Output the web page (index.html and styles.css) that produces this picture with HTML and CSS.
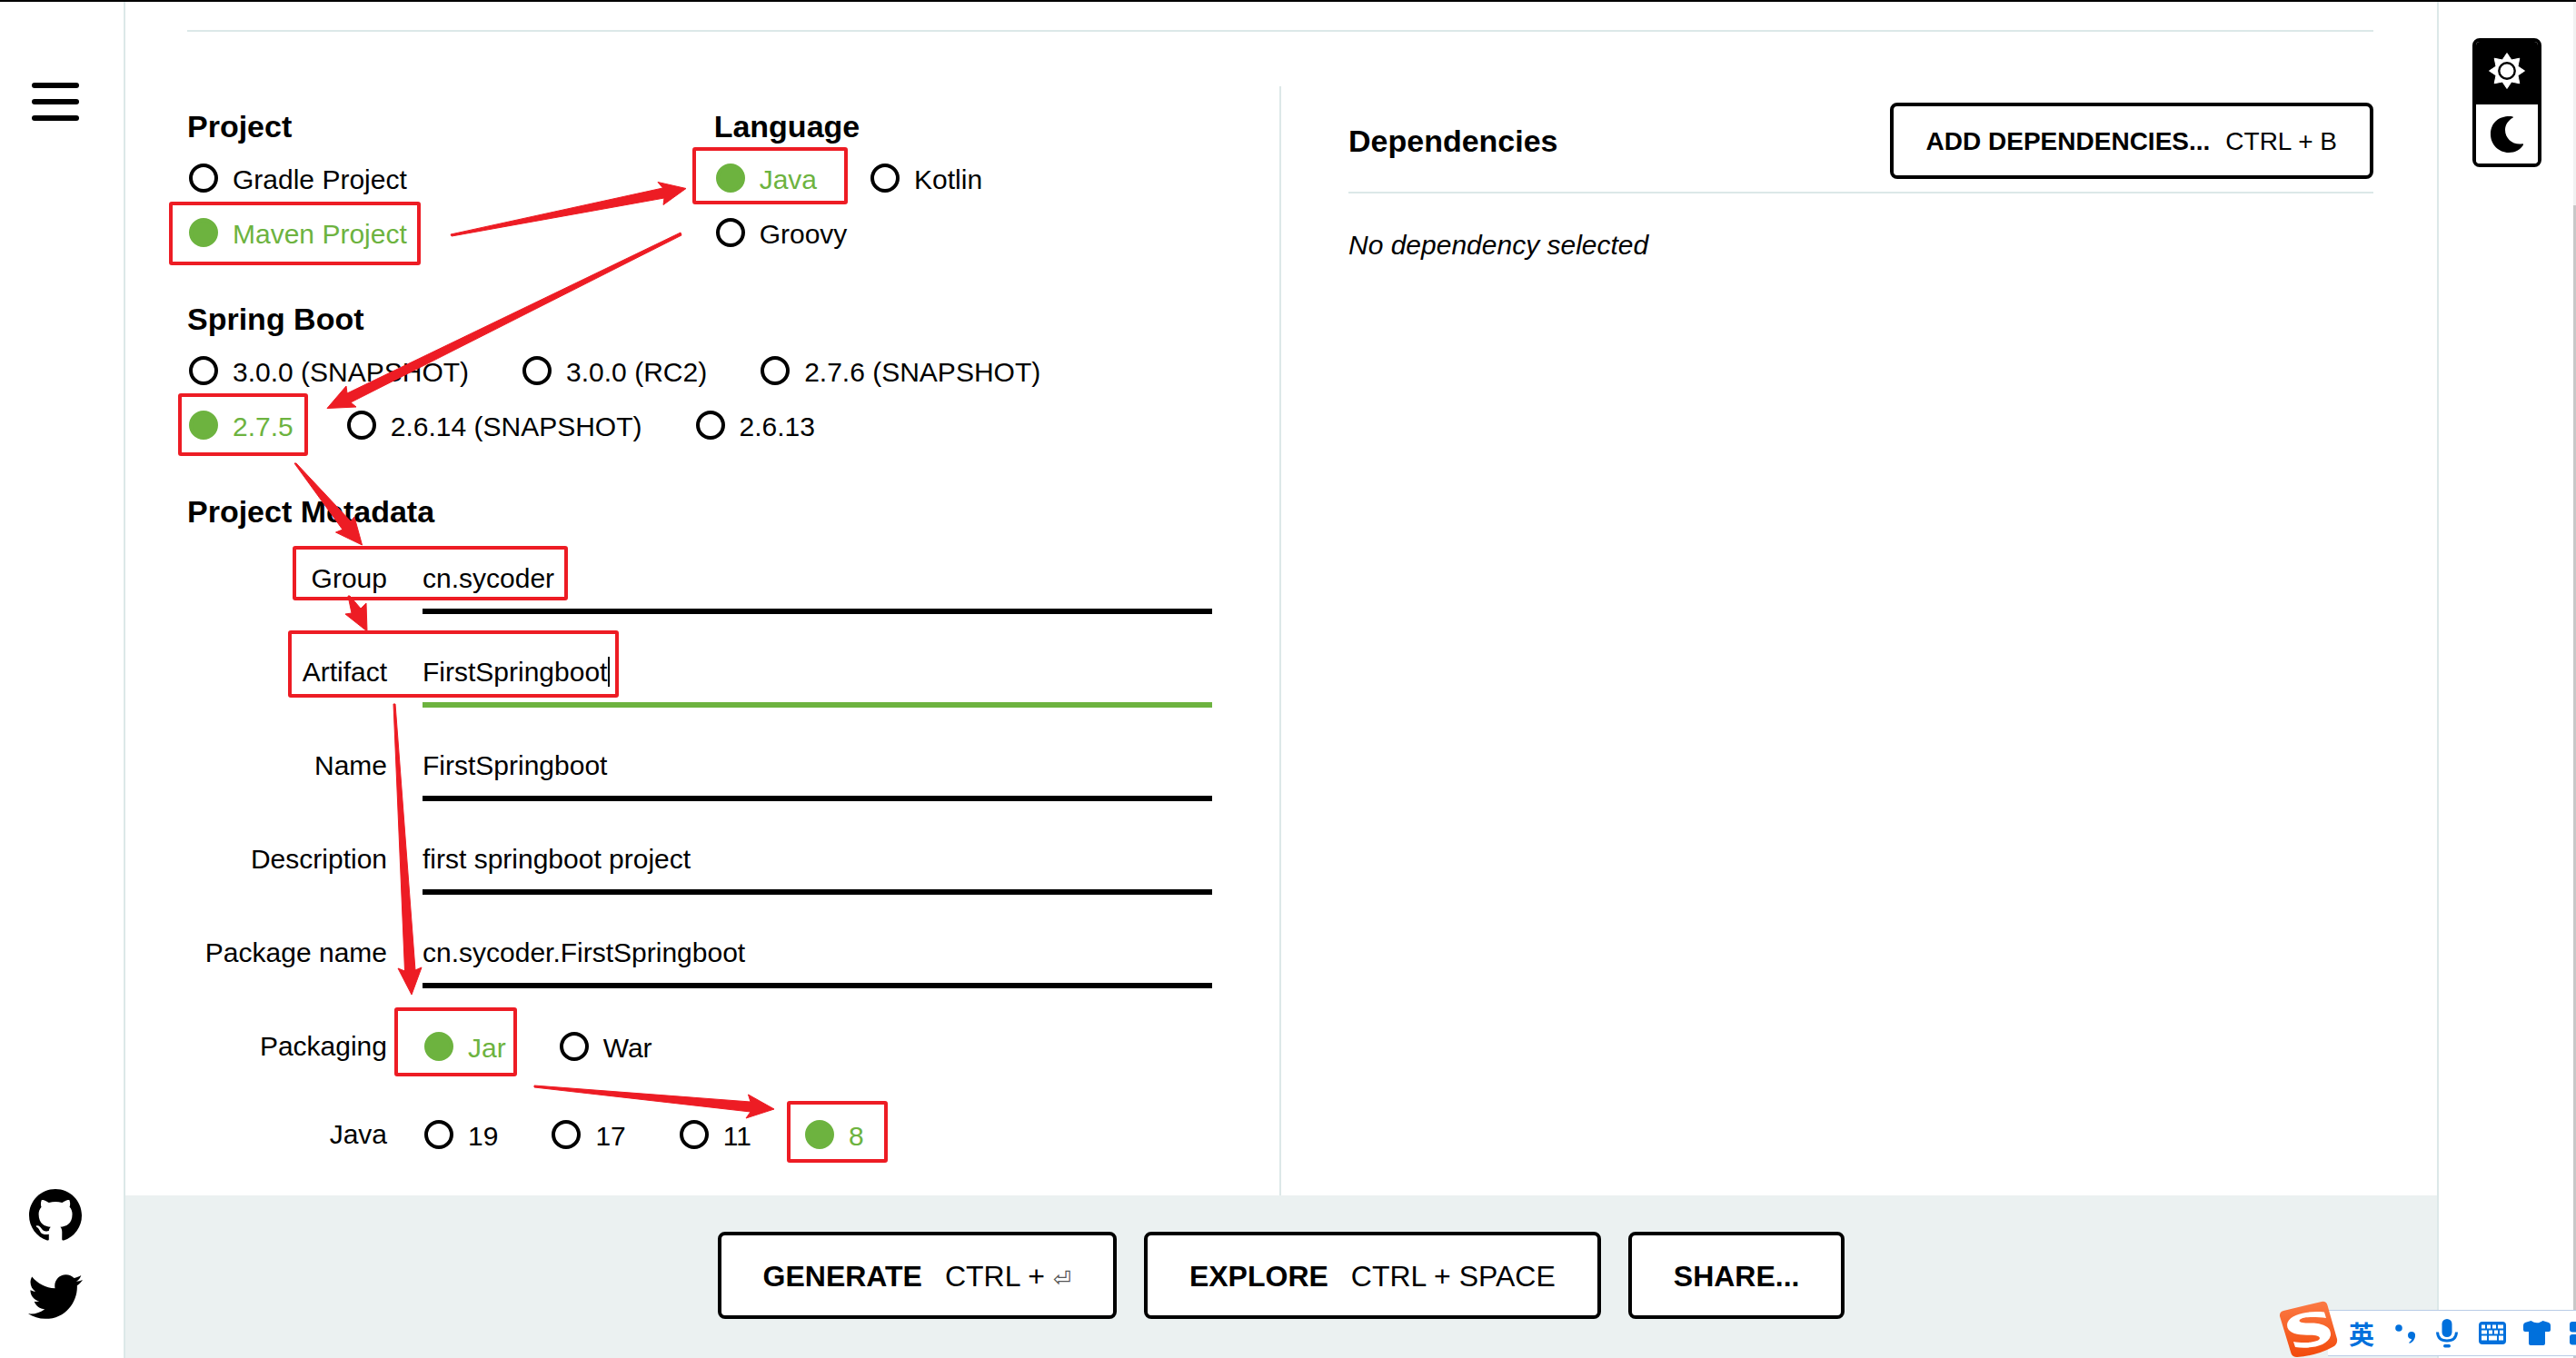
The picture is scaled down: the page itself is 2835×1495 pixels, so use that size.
FILE: index.html
```html
<!DOCTYPE html>
<html lang="en">
<head>
<meta charset="utf-8">
<title>Spring Initializr</title>
<link rel="stylesheet" href="styles.css">
</head>
<body>
<div class="page">
  <aside class="side side-left">
    <button class="menu" type="button" aria-label="Menu"><span></span><span></span><span></span></button>
    <nav class="social">
      <a href="#github" aria-label="GitHub"><svg class="icon-github" viewBox="0 0 16 16"><path d="M8 0C3.58 0 0 3.58 0 8c0 3.54 2.29 6.53 5.47 7.59.4.07.55-.17.55-.38 0-.19-.01-.82-.01-1.49-2.01.37-2.53-.49-2.69-.94-.09-.23-.48-.94-.82-1.13-.28-.15-.68-.52-.01-.53.63-.01 1.08.58 1.23.82.72 1.21 1.87.87 2.33.66.07-.52.28-.87.51-1.07-1.78-.2-3.64-.89-3.64-3.95 0-.87.31-1.59.82-2.15-.08-.2-.36-1.02.08-2.12 0 0 .67-.21 2.2.82.64-.18 1.32-.27 2-.27s1.36.09 2 .27c1.53-1.04 2.2-.82 2.2-.82.44 1.1.16 1.92.08 2.12.51.56.82 1.27.82 2.15 0 3.07-1.87 3.75-3.65 3.95.29.25.54.73.54 1.48 0 1.07-.01 1.93-.01 2.2 0 .21.15.46.55.38A8.01 8.01 0 0 0 16 8c0-4.42-3.58-8-8-8z"/></svg></a>
      <a href="#twitter" aria-label="Twitter"><svg class="icon-twitter" viewBox="0 47 512 418"><path d="M459.37 151.716c.325 4.548.325 9.097.325 13.645 0 138.72-105.583 298.558-298.558 298.558-59.452 0-114.68-17.219-161.137-47.106 8.447.974 16.568 1.299 25.34 1.299 49.055 0 94.213-16.568 130.274-44.832-46.132-.975-84.792-31.188-98.112-72.772 6.498.974 12.995 1.624 19.818 1.624 9.421 0 18.843-1.3 27.614-3.573-48.081-9.747-84.143-51.98-84.143-102.985v-1.299c13.969 7.797 30.214 12.67 47.431 13.319-28.264-18.843-46.781-51.005-46.781-87.391 0-19.492 5.197-37.36 14.294-52.954 51.655 63.675 129.3 105.258 216.365 109.807-1.624-7.797-2.599-15.918-2.599-24.04 0-57.828 46.782-104.934 104.934-104.934 30.213 0 57.502 12.67 76.67 33.137 23.715-4.548 46.456-13.32 66.599-25.34-7.798 24.366-24.366 44.833-46.132 57.827 21.117-2.273 41.584-8.122 60.426-16.243-14.292 20.791-32.161 39.308-52.628 54.253z"/></svg></a>
    </nav>
  </aside>

  <main class="main">
    <form class="content" id="generator">
      <section class="panel panel-left">
        <div class="row-pair">
          <div role="radiogroup" aria-labelledby="h-project">
            <h2 id="h-project">Project</h2>
            <div class="options">
              <label class="option"><input type="radio" name="project"><span>Gradle Project</span></label>
              <label class="option"><input type="radio" name="project" checked><span>Maven Project</span></label>
            </div>
          </div>
          <div role="radiogroup" aria-labelledby="h-language">
            <h2 id="h-language">Language</h2>
            <div class="options">
              <label class="option"><input type="radio" name="language" checked><span>Java</span></label>
              <label class="option"><input type="radio" name="language"><span>Kotlin</span></label>
              <label class="option"><input type="radio" name="language"><span>Groovy</span></label>
            </div>
          </div>
        </div>

        <div role="radiogroup" aria-labelledby="h-boot">
          <h2 id="h-boot">Spring Boot</h2>
          <div class="options">
            <label class="option"><input type="radio" name="boot"><span>3.0.0 (SNAPSHOT)</span></label>
            <label class="option"><input type="radio" name="boot"><span>3.0.0 (RC2)</span></label>
            <label class="option"><input type="radio" name="boot"><span>2.7.6 (SNAPSHOT)</span></label>
            <label class="option"><input type="radio" name="boot" checked><span>2.7.5</span></label>
            <label class="option"><input type="radio" name="boot"><span>2.6.14 (SNAPSHOT)</span></label>
            <label class="option"><input type="radio" name="boot"><span>2.6.13</span></label>
          </div>
        </div>

        <div>
          <h2>Project Metadata</h2>
          <div class="fields">
            <label class="name" for="group">Group</label>
            <input class="text" id="group" type="text" value="cn.sycoder">
            <label class="name" for="artifact">Artifact</label>
            <input class="text is-active" id="artifact" type="text" value="FirstSpringboot">
            <label class="name" for="name">Name</label>
            <input class="text" id="name" type="text" value="FirstSpringboot">
            <label class="name" for="description">Description</label>
            <input class="text" id="description" type="text" value="first springboot project">
            <label class="name" for="package">Package name</label>
            <input class="text" id="package" type="text" value="cn.sycoder.FirstSpringboot">
            <span class="name" id="l-packaging">Packaging</span>
            <div class="options" role="radiogroup" aria-labelledby="l-packaging">
              <label class="option"><input type="radio" name="packaging" checked><span>Jar</span></label>
              <label class="option"><input type="radio" name="packaging"><span>War</span></label>
            </div>
            <span class="name" id="l-java">Java</span>
            <div class="options" role="radiogroup" aria-labelledby="l-java">
              <label class="option"><input type="radio" name="java"><span>19</span></label>
              <label class="option"><input type="radio" name="java"><span>17</span></label>
              <label class="option"><input type="radio" name="java"><span>11</span></label>
              <label class="option"><input type="radio" name="java" checked><span>8</span></label>
            </div>
          </div>
        </div>
      </section>

      <div class="divider"></div>

      <section class="panel panel-right">
        <header class="deps-head">
          <h2>Dependencies</h2>
          <button class="btn btn-small" type="button"><b>ADD DEPENDENCIES...</b><span>CTRL + B</span></button>
        </header>
        <p class="empty">No dependency selected</p>
      </section>
    </form>

    <footer class="actions">
      <button class="btn" type="submit" form="generator"><b>GENERATE</b><span>CTRL + <span class="return">⏎</span></span></button>
      <button class="btn" type="button"><b>EXPLORE</b><span>CTRL + SPACE</span></button>
      <button class="btn" type="button"><b>SHARE...</b></button>
    </footer>
  </main>

  <aside class="side side-right">
    <div class="switch">
      <button class="mode is-on" type="button" aria-label="Light theme">
        <svg width="42" height="42" viewBox="-21 -21 42 42"><g fill="#fff" stroke="#fff" stroke-width="1" stroke-linejoin="round"><path d="M0-19.500L5-12 13.800-13.800 12-5 19.500 0 12 5 13.800 13.800 5 12 0 19.500-5 12-13.800 13.800-12 5-19.500 0-12-5-13.800-13.800-5-12z"/></g><circle r="8.700" fill="#fff" stroke="#000" stroke-width="2.400"/></svg>
      </button>
      <button class="mode" type="button" aria-label="Dark theme">
        <svg width="38" height="42" viewBox="0 0 38 42"><path d="M25.500 1.500C15-.5 1 5 1 21c0 11 9 20 20 20 7 0 13-3.500 16-8.500.3-1-.2-1.300-1-1.200C26 33 17 26 17 16c0-5.500 3.500-10.500 8.300-13.200.7-.5.8-1.100.2-1.300z"/></svg>
      </button>
    </div>
  </aside>
</div>

<div class="scrollbar"><span></span></div>

<svg class="marks" width="1100" height="1300" viewBox="0 0 1100 1300" aria-hidden="true">
  <rect x="669" y="723" width="2" height="33"/>
  <g class="boxes">
    <rect x="188" y="224" width="273" height="66" rx="1"/>
    <rect x="764" y="164" width="167" height="59" rx="1"/>
    <rect x="198" y="435" width="139" height="65" rx="1"/>
    <rect x="324" y="603" width="299" height="56" rx="1"/>
    <rect x="319" y="696" width="360" height="70" rx="1"/>
    <rect x="436" y="1111" width="131" height="72" rx="1"/>
    <rect x="868" y="1214" width="107" height="64" rx="1"/>
  </g>
  <g class="arrows">
    <path d="M496 258L729.500 207 724 200.500 755 207.500 730 225.500 731 218 497 260z"/>
    <path d="M749 256L382 433 381 425 360 449.500 392 448 386 443 750 259z"/>
    <path d="M324 510L377 583 369.500 586 398.500 600 390 569 386 574 326 510z"/>
    <path d="M383 656L387 675 380 676 404 695 403 664 397 670 385 656z"/>
    <path d="M433 775L445.500 1069 438 1066 453 1095 464 1065 457 1068 435 775z"/>
    <path d="M588 1195L826 1213 823.500 1205 852 1221 821 1231 826 1224 588 1197z"/>
  </g>
</svg>

<div class="ime" lang="zh">
  <svg class="ime-logo" width="66" height="64" viewBox="0 0 66 64">
    <defs><linearGradient id="sg" x1="0" y1="0" x2="0" y2="1"><stop offset="0" stop-color="#fb7a45"/><stop offset="1" stop-color="#f24a0b"/></linearGradient></defs>
    <path fill="url(#sg)" d="M5 11L47 1q5-1 6.500 4L64 42q1 6-5 9-16 9-39 11-5 0-6.500-4L1 17q-.5-5 4-6z"/>
    <path fill="#fff" d="M50 12.500C36 11 14 13 9.500 24 7 33 16 37 27 37.500c9 .5 17-.5 18 3.500C45 46 27 47 16 45l2 6c14 2 36 0 39-13 1-10-10-13-20-13.500-8 0-14 0-14.500-2.500C24 17 40 17.500 52 19z"/>
  </svg>
  <span class="ime-lang">英</span>
  <svg width="22" height="22" viewBox="0 0 22 22"><circle cx="4" cy="5" r="3.800"/><path d="M18 9c3 0 4.500 2 4 5-.500 4-3 7-6.500 8v-1.500c1.500-1 2.500-2 2.500-3.500-2.500 0-4-1.500-4-4s1.500-4 4-4z"/></svg>
  <svg width="24" height="32" viewBox="0 0 24 32"><rect x="6.500" y="0" width="11" height="20" rx="5.500"/><path d="M1.500 14.500q.5 9.500 10.500 9.500t10.500-9.500" fill="none" stroke="#0070dc" stroke-width="3"/><rect x="8" y="28" width="8" height="3.500" rx="1.700"/></svg>
  <svg width="30" height="25" viewBox="0 0 30 25"><rect width="30" height="25" rx="4"/><g fill="#fff"><path d="M3 3.500h4v4H3zM9 3.500h4v4H9zM15 3.500h4v4h-4zM21 3.500h6v4h-6zM3 9.500h6v4H3zM11 9.500h4v4h-4zM17 9.500h4v4h-4zM23 9.500h4v4h-4zM3 15.500h6v5H3zM11 15.500h9v5h-9zM22 15.500h5v5h-5z"/></g></svg>
  <svg class="ime-skin" width="30" height="28" viewBox="0 0 30 28"><path d="M8.500 0q6.500 4.500 13 0L28 2q2 1 2 3v5q0 2-2 2h-4v13q0 2-2 2H8q-2 0-2-2V12H2q-2 0-2-2V5q0-2 2-3z"/></svg>
  <svg width="26" height="26" viewBox="0 0 26 26"><rect width="11.500" height="11.500" rx="3"/><rect y="14" width="11.500" height="11.500" rx="3"/><rect x="14" width="11.500" height="11.500" rx="3"/><rect x="14" y="14" width="11.500" height="11.500" rx="3"/></svg>
</div>
</body>
</html>
```
FILE: styles.css
```css
:root {
  --green: #6db33f;
  --line: #dce8e8;
  --mark: #ed1c24;
}

* { box-sizing: border-box; }

body {
  margin: 0;
  background: #fff;
  color: #000;
  font: 30px/44px "Liberation Sans", Arial, sans-serif;
  position: relative;
  overflow: hidden;
}

.page {
  display: grid;
  grid-template-columns: 138px minmax(0, 1fr) 153px;
  min-height: 100vh;
  border-top: 2px solid #000;
}

button { font: inherit; color: inherit; cursor: pointer; }

.side { display: flex; flex-direction: column; }
.side-left {
  border-right: 2px solid var(--line);
  justify-content: space-between;
  padding: 89px 0 43px 31px;
}
.side-right {
  border-left: 2px solid var(--line);
  padding: 40px 0 0 37px;
}

.menu {
  display: grid;
  gap: 12px;
  width: 60px;
  padding: 0 4px;
  border: 0;
  background: none;
}
.menu span { height: 6px; border-radius: 3px; background: #000; }

.social { display: grid; gap: 36px; }
.social svg { display: block; }
.icon-github { width: 58px; height: 58px; margin-left: 1px; }
.icon-twitter { width: 60px; height: 49px; }

.main { display: flex; flex-direction: column; }

.content {
  flex: 1;
  display: grid;
  grid-template-columns: 1fr 2px 1fr;
  margin: 31px 70px 0 68px;
  padding-top: 60px;
  border-top: 2px solid var(--line);
}
.divider { background: var(--line); }

.panel-left {
  display: flex;
  flex-direction: column;
  gap: 43px;
  padding: 22px 74px 34px 0;
}
.panel-right { padding: 18px 0 0 74px; }

h2 { margin: 0; font-size: 34px; line-height: 44px; }

.row-pair { display: grid; grid-template-columns: 37fr 35fr; }

.options { display: flex; flex-wrap: wrap; }
h2 + .options { margin-top: 5px; }

.option {
  display: flex;
  align-items: center;
  height: 60px;
  margin-right: 57px;
}
.option span { padding-top: 4px; }
.option input {
  appearance: none;
  width: 32px;
  height: 32px;
  margin: 0 16px 0 2px;
  border: 4px solid #000;
  border-radius: 50%;
}
.option input:checked { border-color: var(--green); background: var(--green); }
.option input:checked + span { color: var(--green); }

.fields {
  display: grid;
  grid-template-columns: 220px 1fr;
  column-gap: 39px;
  row-gap: 31px;
  padding-top: 19px;
  align-items: start;
}
.fields .options { align-self: center; }
.name { text-align: right; line-height: 66px; }
.text {
  width: 100%;
  height: 72px;
  padding: 0;
  border: 0;
  border-bottom: 6px solid #000;
  outline: 0;
  background: none;
  color: inherit;
  font: inherit;
}
.text.is-active { border-color: var(--green); }

.deps-head {
  display: flex;
  align-items: center;
  justify-content: space-between;
  padding-bottom: 14px;
  border-bottom: 2px solid var(--line);
}
.empty { margin: 35px 0 0; font-style: italic; }

.btn {
  display: flex;
  align-items: center;
  gap: 25px;
  height: 96px;
  padding: 2px 46px 0;
  border: 4px solid #000;
  border-radius: 8px;
  background: #fff;
  font-size: 32px;
  white-space: nowrap;
}
.btn-small { gap: 17px; height: 84px; padding: 2px 36px 0; font-size: 28px; }
.return {
  font-family: "DejaVu Sans", sans-serif;
  font-size: 24px;
  line-height: 24px;
  color: #555;
}

.actions {
  display: flex;
  justify-content: center;
  gap: 30px;
  padding: 40px 0 43px;
  background: #ebf1f1;
}

.switch {
  width: 76px;
  border: 4px solid #000;
  border-radius: 8px;
  overflow: hidden;
}
.mode {
  display: grid;
  place-items: center;
  width: 100%;
  height: 65px;
  padding: 0;
  border: 0;
  background: #fff;
}
.mode.is-on { height: 69px; padding-bottom: 5px; background: #000; }

.scrollbar {
  position: absolute;
  top: 2px;
  right: 0;
  bottom: 0;
  width: 3px;
  padding-top: 224px;
  background: #f1f1f1;
}
.scrollbar span { display: block; height: 100%; background: #c8c8c8; }

.marks { position: absolute; top: 0; left: 0; pointer-events: none; }
.boxes { fill: none; stroke: var(--mark); stroke-width: 4; }
.arrows { fill: var(--mark); stroke: var(--mark); stroke-width: 1; stroke-linejoin: round; }

.ime {
  position: absolute;
  right: -21px;
  bottom: 2px;
  display: flex;
  align-items: center;
  gap: 23px;
  height: 51px;
  padding-right: 2px;
  border: solid #b9cce6;
  border-width: 1px 0;
  background: #fff;
  fill: #0070dc;
}
.ime svg { flex: none; }
.ime .ime-logo { margin: 0 -12px 8px -54px; }
.ime .ime-skin { margin: 0 -2px 0 -4px; }
.ime-lang {
  color: #0070dc;
  font: bold 28px/44px "Noto Sans CJK SC", sans-serif;
}
```
